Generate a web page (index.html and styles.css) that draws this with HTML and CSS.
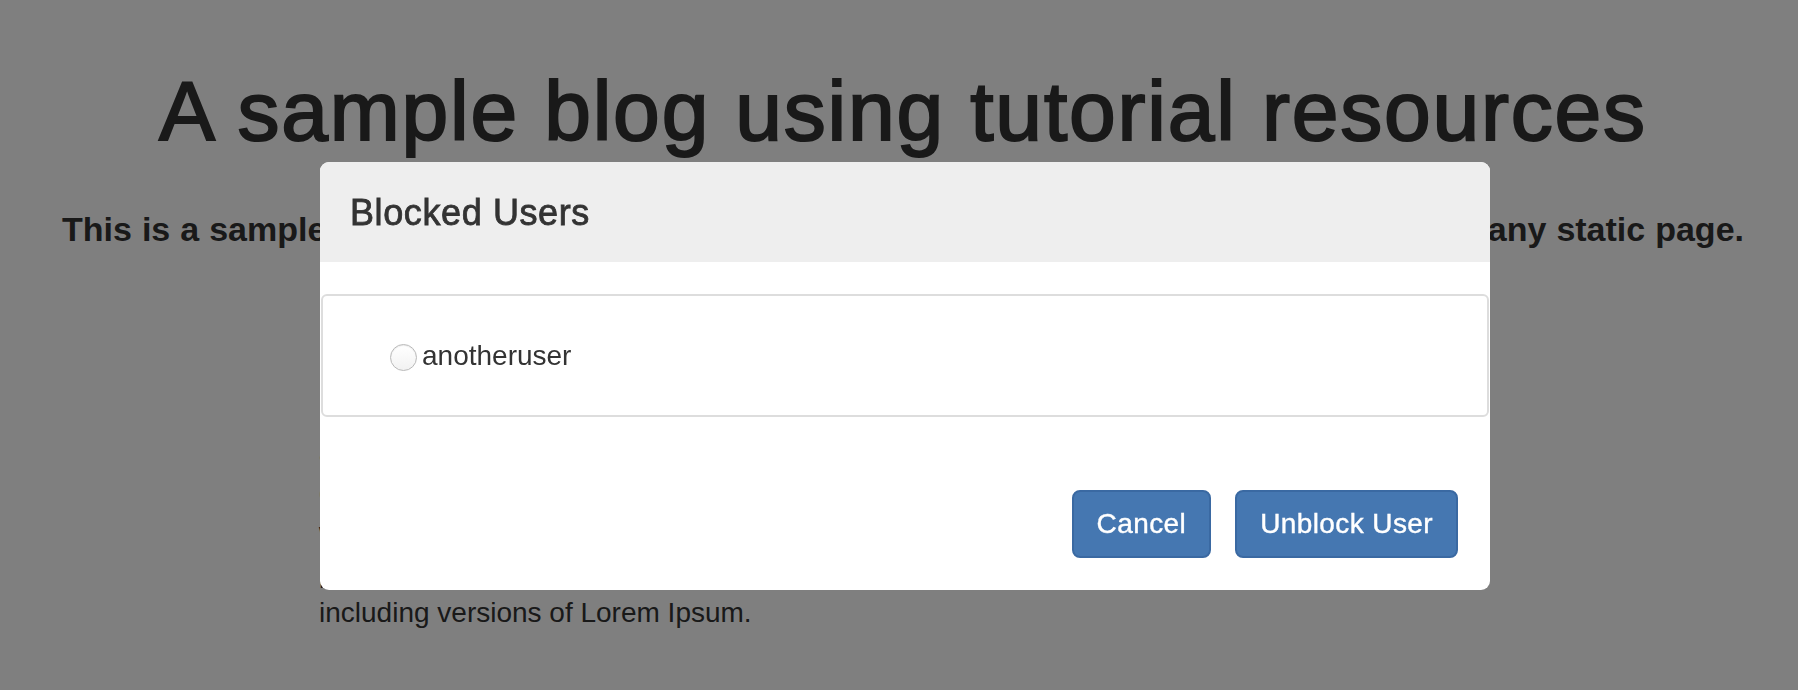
FILE: index.html
```html
<!DOCTYPE html>
<html lang="en">
<head>
<meta charset="utf-8">
<title>Blocked Users</title>
<link rel="stylesheet" href="styles.css">
</head>
<body>
  <div class="page">
    <header class="masthead">
      <h1 class="blog-title">A sample blog using tutorial resources</h1>
      <p class="blog-lead">This is a sample blog created with tutorial resources. Its layout can easily be applied to any static page.</p>
    </header>
    <main class="container">
      <article class="post">
        <p class="post-text">Lorem Ipsum is simply dummy text of the printing and typesetting industry. Lorem Ipsum has been the industry's standard dummy text ever since the 1500s, when an unknown printer took a galley of type and scrambled it to make a type specimen book. It has survived not only five centuries, but also the leap into electronic typesetting, remaining essentially unchanged. It was popularised in the 1960s with the release of Letraset sheets containing Lorem Ipsum passages, and more recently with desktop publishing software like Aldus PageMaker<br>including versions of Lorem Ipsum.</p>
      </article>
    </main>
  </div>

  <div class="backdrop">
    <div class="modal">
      <div class="modal-header">
        <h4 class="modal-title">Blocked Users</h4>
      </div>
      <div class="modal-body">
        <div class="user-list">
          <label class="user-option"><input class="radio" type="radio" name="blocked">anotheruser</label>
        </div>
      </div>
      <div class="modal-footer">
        <button class="btn" type="button">Cancel</button>
        <button class="btn" type="button">Unblock User</button>
      </div>
    </div>
  </div>
</body>
</html>
```

FILE: styles.css
```css
html, body {
  margin: 0;
  padding: 0;
  background: #ffffff;
}

body {
  font-family: "Liberation Sans", Arial, Helvetica, sans-serif;
  color: #333333;
  overflow: hidden;
}

.page {
  margin-left: 8px;
}

.masthead {
  padding-top: 65px;
  text-align: center;
}

.blog-title {
  margin: 0;
  font-size: 84px;
  line-height: 92px;
  font-weight: 400;
  letter-spacing: 1.8px;
  -webkit-text-stroke: 2px #333333;
  color: #333333;
}

.blog-lead {
  width: 1682px;
  margin: 48px auto 0;
  font-size: 34px;
  line-height: 48px;
  font-weight: 700;
  text-align: justify;
  text-align-last: justify;
}

.container {
  width: 1168px;
  margin: 0 auto;
}

.post-text {
  margin: 100px 0 0;
  font-size: 28px;
  line-height: 40px;
}

.backdrop {
  position: fixed;
  inset: 0;
  background: rgba(0, 0, 0, 0.5);
  padding-top: 162px;
}

.modal {
  width: 1170px;
  margin-left: 320px;
  background: #ffffff;
  border-radius: 9px;
  overflow: hidden;
}

.modal-header {
  background: #eeeeee;
  height: 100px;
  box-sizing: border-box;
  padding: 31px 30px 0;
}

.modal-title {
  margin: 0;
  font-size: 36px;
  line-height: 40px;
  font-weight: 400;
  letter-spacing: 0.6px;
  -webkit-text-stroke: 0.8px #333333;
  color: #333333;
}

.modal-body {
  padding: 32px 1px 0;
}

.user-list {
  height: 123px;
  box-sizing: border-box;
  border: 2px solid #dddddd;
  border-radius: 6px;
  padding-left: 67px;
  display: flex;
  align-items: center;
}

.user-option {
  display: flex;
  align-items: center;
  font-size: 28px;
  line-height: 40px;
  color: #333333;
}

.radio {
  -webkit-appearance: none;
  appearance: none;
  width: 27px;
  height: 27px;
  margin: 4px 5px 0 0;
  border-radius: 50%;
  border: 1px solid #b9b9b9;
  background: linear-gradient(#ffffff, #f2f2f2);
  box-shadow: inset 0 1px 1px rgba(0, 0, 0, 0.08);
  box-sizing: border-box;
}

.modal-footer {
  display: flex;
  justify-content: flex-end;
  gap: 24px;
  padding: 73px 32px 32px;
}

.btn {
  height: 68px;
  padding: 0 23px;
  border: 2px solid #3a69a2;
  border-radius: 8px;
  background: #4577b1;
  color: #ffffff;
  font-family: "Liberation Sans", Arial, Helvetica, sans-serif;
  font-size: 28px;
  line-height: 1;
  letter-spacing: 0.4px;
  -webkit-text-stroke: 0.4px #ffffff;
}
```
